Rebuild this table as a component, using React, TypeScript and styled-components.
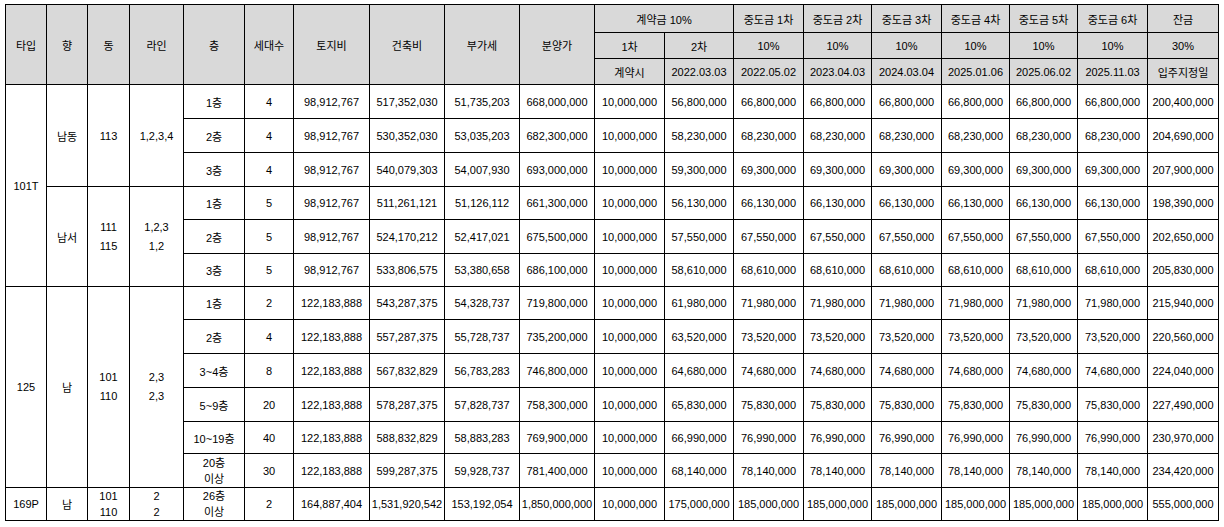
import styled, {createGlobalStyle} from 'styled-components'

type Lead = {text: string; span: number}

type Row = {
  lead?: Lead[]
  floor: string
  units: number
  land: string
  build: string
  vat: string
  price: string
  second: string
  mid: string
  rest: string
  h: number
}

const widths = [41, 41, 42, 54, 61, 49, 76, 75, 75, 75, 70, 69, 70, 68, 70, 68, 68, 70, 71]

const midRounds = ['중도금 1차', '중도금 2차', '중도금 3차', '중도금 4차', '중도금 5차', '중도금 6차']
const midDates = ['2022.05.02', '2023.04.03', '2024.03.04', '2025.01.06', '2025.06.02', '2025.11.03']

const rows: Row[] = [
  {lead: [{text: '101T', span: 6}, {text: '남동', span: 3}, {text: '113', span: 3}, {text: '1,2,3,4', span: 3}],
    floor: '1층', units: 4, land: '98,912,767', build: '517,352,030', vat: '51,735,203', price: '668,000,000', second: '56,800,000', mid: '66,800,000', rest: '200,400,000', h: 34},
  {floor: '2층', units: 4, land: '98,912,767', build: '530,352,030', vat: '53,035,203', price: '682,300,000', second: '58,230,000', mid: '68,230,000', rest: '204,690,000', h: 34},
  {floor: '3층', units: 4, land: '98,912,767', build: '540,079,303', vat: '54,007,930', price: '693,000,000', second: '59,300,000', mid: '69,300,000', rest: '207,900,000', h: 34},
  {lead: [{text: '남서', span: 3}, {text: '111\n115', span: 3}, {text: '1,2,3\n1,2', span: 3}],
    floor: '1층', units: 5, land: '98,912,767', build: '511,261,121', vat: '51,126,112', price: '661,300,000', second: '56,130,000', mid: '66,130,000', rest: '198,390,000', h: 33},
  {floor: '2층', units: 5, land: '98,912,767', build: '524,170,212', vat: '52,417,021', price: '675,500,000', second: '57,550,000', mid: '67,550,000', rest: '202,650,000', h: 34},
  {floor: '3층', units: 5, land: '98,912,767', build: '533,806,575', vat: '53,380,658', price: '686,100,000', second: '58,610,000', mid: '68,610,000', rest: '205,830,000', h: 33},
  {lead: [{text: '125', span: 6}, {text: '남', span: 6}, {text: '101\n110', span: 6}, {text: '2,3\n2,3', span: 6}],
    floor: '1층', units: 2, land: '122,183,888', build: '543,287,375', vat: '54,328,737', price: '719,800,000', second: '61,980,000', mid: '71,980,000', rest: '215,940,000', h: 33},
  {floor: '2층', units: 4, land: '122,183,888', build: '557,287,375', vat: '55,728,737', price: '735,200,000', second: '63,520,000', mid: '73,520,000', rest: '220,560,000', h: 34},
  {floor: '3~4층', units: 8, land: '122,183,888', build: '567,832,829', vat: '56,783,283', price: '746,800,000', second: '64,680,000', mid: '74,680,000', rest: '224,040,000', h: 34},
  {floor: '5~9층', units: 20, land: '122,183,888', build: '578,287,375', vat: '57,828,737', price: '758,300,000', second: '65,830,000', mid: '75,830,000', rest: '227,490,000', h: 34},
  {floor: '10~19층', units: 40, land: '122,183,888', build: '588,832,829', vat: '58,883,283', price: '769,900,000', second: '66,990,000', mid: '76,990,000', rest: '230,970,000', h: 32},
  {floor: '20층\n이상', units: 30, land: '122,183,888', build: '599,287,375', vat: '59,928,737', price: '781,400,000', second: '68,140,000', mid: '78,140,000', rest: '234,420,000', h: 34},
  {lead: [{text: '169P', span: 1}, {text: '남', span: 1}, {text: '101\n110', span: 1}, {text: '2\n2', span: 1}],
    floor: '26층\n이상', units: 2, land: '164,887,404', build: '1,531,920,542', vat: '153,192,054', price: '1,850,000,000', second: '175,000,000', mid: '185,000,000', rest: '555,000,000', h: 33},
]

// spanning cells have room for looser lines; single-row cells squeeze two lines in
const Lines = ({text, loose}: {text: string; loose?: boolean}) => {
  const parts = text.split('\n')
  const lh = parts.length === 1 ? 'normal' : loose ? '19px' : '16px'
  return <>{parts.map((p, i) => <Line key={i} $lh={lh}>{p}</Line>)}</>
}

export default function App() {
  return (
    <>
      <GlobalStyle />
      <Sheet>
        <colgroup>
          {widths.map((w, i) => <col key={i} style={{width: w}} />)}
        </colgroup>
        <thead>
          <tr style={{height: 28}}>
            {['타입', '향', '동', '라인', '층', '세대수', '토지비', '건축비', '부가세', '분양가'].map(t =>
              <Head key={t} rowSpan={3}>{t}</Head>
            )}
            <Head colSpan={2}>계약금 10%</Head>
            {midRounds.map(t => <Head key={t}>{t}</Head>)}
            <Head>잔금</Head>
          </tr>
          <tr style={{height: 26}}>
            <Head>1차</Head>
            <Head>2차</Head>
            {midRounds.map(t => <Head key={t}>10%</Head>)}
            <Head>30%</Head>
          </tr>
          <tr style={{height: 26}}>
            <Head>계약시</Head>
            <Head>2022.03.03</Head>
            {midDates.map(d => <Head key={d}>{d}</Head>)}
            <Head>입주지정일</Head>
          </tr>
        </thead>
        <tbody>
          {rows.map((r, i) => (
            <tr key={i} style={{height: r.h}}>
              {r.lead?.map((l, j) => (
                <Cell key={j} rowSpan={l.span}><Lines text={l.text} loose={l.span > 1} /></Cell>
              ))}
              <Cell><Lines text={r.floor} /></Cell>
              <Cell>{r.units}</Cell>
              <Cell>{r.land}</Cell>
              <Cell>{r.build}</Cell>
              <Cell>{r.vat}</Cell>
              <Cell>{r.price}</Cell>
              <Cell>10,000,000</Cell>
              <Cell>{r.second}</Cell>
              {midRounds.map(t => <Cell key={t}>{r.mid}</Cell>)}
              <Cell>{r.rest}</Cell>
            </tr>
          ))}
        </tbody>
      </Sheet>
    </>
  )
}

const GlobalStyle = createGlobalStyle`
  html, body {
    margin: 0;
    padding: 0;
    background: #fff;
  }
  body {
    font-family: "Liberation Sans", "Noto Sans CJK KR", sans-serif;
    color: #000;
  }
`

const Sheet = styled.table`
  margin: 4px 0 0 5px;
  width: 1214px;
  table-layout: fixed;
  border-collapse: collapse;
  font-size: 11px;
`

const Cell = styled.td`
  border: 1px solid #000;
  padding: 0;
  text-align: center;
  vertical-align: middle;
  white-space: nowrap;
  overflow: hidden;
`

const Head = styled(Cell).attrs({as: 'th'})`
  background: #d9d9d9;
  font-weight: normal;
`

const Line = styled.div<{$lh: string}>`
  line-height: ${p => p.$lh};
`
